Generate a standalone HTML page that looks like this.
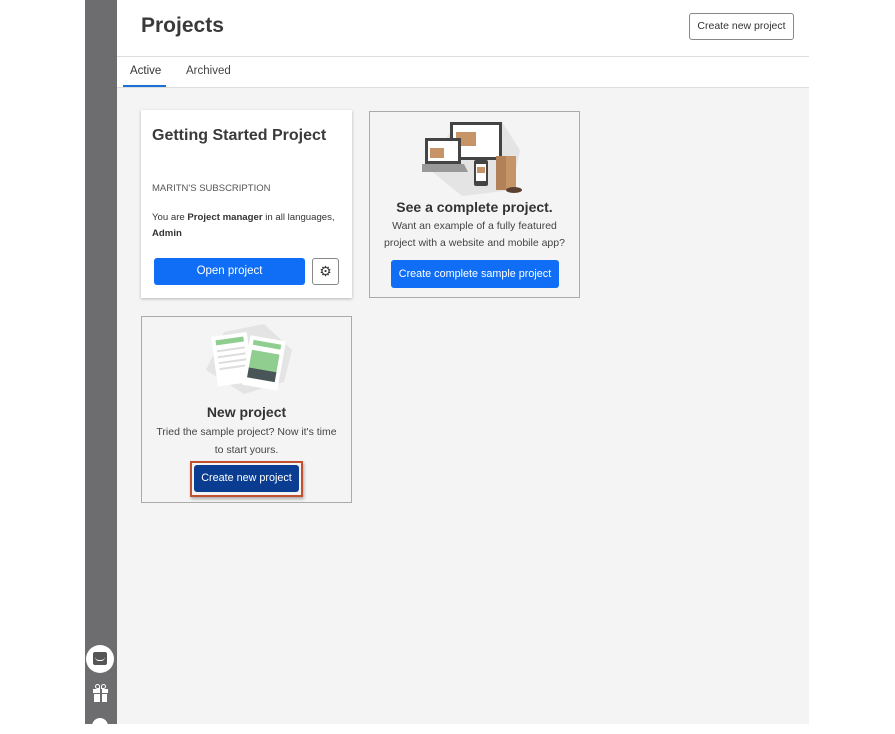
<!DOCTYPE html>
<html><head><meta charset="utf-8"><style>
*{box-sizing:border-box;margin:0;padding:0}
body{width:895px;height:724px;background:#fff;font-family:"Liberation Sans",sans-serif;color:#333;position:relative;overflow:hidden}
.side{position:absolute;left:85px;top:0;width:32px;height:724px;background:#6d6d6f}
.main{position:absolute;left:117px;top:0;width:692px;height:724px;background:#f4f4f4}
.hdr{position:absolute;left:0;top:0;width:692px;height:57px;background:#fff;border-bottom:1px solid #ddd}
.hdr h1{position:absolute;left:24px;top:14px;font-size:21px;font-weight:bold;color:#3a3a3a}
.hbtn{position:absolute;left:572px;top:13px;width:105px;height:27px;border:1px solid #888;border-radius:3px;font-size:10.5px;line-height:25px;text-align:center;color:#333;background:#fff;white-space:nowrap}
.tabs{position:absolute;left:0;top:57px;width:692px;height:31px;background:#fff;border-bottom:1px solid #ddd;font-size:11.5px}
.tabs span{position:absolute;top:8px}
.card{position:absolute;text-align:center}
.btn{position:absolute;background:#0f6ef5;color:#fff;border-radius:3px;font-size:11.5px;text-align:center;white-space:nowrap}
</style></head><body>
<div class="side">
<div style="position:absolute;left:1px;top:645px;width:28px;height:28px;border-radius:50%;background:#fff"><div style="position:absolute;left:7px;top:7px;width:14px;height:13px;background:#555;border-radius:2px"></div><div style="position:absolute;left:9px;top:12px;width:10px;height:4px;border-bottom:1.5px solid #fff;border-radius:0 0 5px 5px"></div></div>
<div style="position:absolute;left:8px;top:689px;width:15px;height:4px;background:#fff"></div>
<div style="position:absolute;left:9px;top:694px;width:13px;height:8px;background:#fff"></div>
<div style="position:absolute;left:14.5px;top:689px;width:2px;height:13px;background:#6d6d6f"></div>
<div style="position:absolute;left:10px;top:684px;width:5px;height:5px;border:1.5px solid #fff;border-radius:50% 50% 0 50%"></div>
<div style="position:absolute;left:16px;top:684px;width:5px;height:5px;border:1.5px solid #fff;border-radius:50% 50% 50% 0"></div>
<div style="position:absolute;left:7px;top:718px;width:16px;height:16px;border-radius:50%;background:#fff"></div>
</div>
<div class="main">
<div class="hdr"><h1>Projects</h1><div class="hbtn">Create new project</div></div>
<div class="tabs"><span style="left:13px;color:#333">Active</span><div style="position:absolute;left:6px;top:28px;width:43px;height:2px;background:#1a6fd8"></div><span style="left:69px;color:#444">Archived</span></div>

<div class="card" style="left:24px;top:110px;width:211px;height:188px;background:#fff;box-shadow:0 1px 3px rgba(0,0,0,.25);text-align:left">
<div style="position:absolute;left:11px;top:17px;font-size:16px;font-weight:bold;color:#3a3a3a;white-space:nowrap">Getting Started Project</div>
<div style="position:absolute;left:11px;top:73px;font-size:9.5px;color:#555">MARITN'S SUBSCRIPTION</div>
<div style="position:absolute;left:11px;top:100px;font-size:9.6px;line-height:16px;color:#333;width:200px">You are <b>Project manager</b> in all languages,<br><b>Admin</b></div>
<div class="btn" style="left:13px;top:148px;width:151px;height:27px;line-height:27px">Open project</div>
<div style="position:absolute;left:171px;top:148px;width:27px;height:27px;border:1px solid #888;border-radius:3px;text-align:center;line-height:25px;font-size:14px;color:#333">&#9881;</div>
</div>

<div class="card" style="left:252px;top:111px;width:211px;height:187px;border:1px solid #aaa">
<svg style="position:absolute;left:52px;top:8px" width="104" height="80" viewBox="0 0 104 80">
<polygon points="30,8 80,2 98,30 90,70 40,76 8,50" fill="#e4e4e4"/>
<rect x="28" y="2" width="52" height="38" fill="#444"/><rect x="31" y="5" width="46" height="32" fill="#fff"/><rect x="34" y="12" width="20" height="14" fill="#c79468"/>
<rect x="3" y="18" width="36" height="26" fill="#444"/><rect x="6" y="21" width="30" height="20" fill="#fff"/><rect x="8" y="28" width="14" height="10" fill="#c79468"/>
<polygon points="0,44 42,44 46,52 -2,52" fill="#999"/>
<rect x="52" y="40" width="14" height="26" rx="2" fill="#444"/><rect x="54" y="44" width="10" height="17" fill="#fff"/><rect x="55" y="47" width="8" height="6" fill="#c79468"/>
<rect x="74" y="36" width="20" height="34" fill="#c79468"/><rect x="74" y="36" width="10" height="34" fill="#b38158"/>
<ellipse cx="92" cy="70" rx="8" ry="3" fill="#5a4030"/>
</svg>
<div style="position:absolute;left:0;width:209px;top:87px;font-size:14px;font-weight:bold;color:#333">See a complete project.</div>
<div style="position:absolute;left:0;width:209px;top:106px;font-size:10.5px;line-height:17px;color:#444">Want an example of a fully featured<br>project with a website and mobile app?</div>
<div class="btn" style="left:21px;top:148px;width:168px;height:28px;line-height:28px;font-size:10.8px">Create complete sample project</div>
</div>

<div class="card" style="left:24px;top:316px;width:211px;height:187px;border:1px solid #aaa">
<svg style="position:absolute;left:62px;top:5px" width="90" height="75" viewBox="0 0 90 75">
<polygon points="20,10 60,2 88,28 80,60 40,72 2,48" fill="#e4e4e4"/>
<g transform="rotate(-8 30 35)"><rect x="10" y="12" width="36" height="50" fill="#fff"/><rect x="14" y="16" width="28" height="5" fill="#8fce8f"/><rect x="14" y="26" width="28" height="2" fill="#ddd"/><rect x="14" y="32" width="28" height="2" fill="#ddd"/><rect x="14" y="38" width="28" height="2" fill="#ddd"/><rect x="14" y="44" width="28" height="2" fill="#ddd"/></g>
<g transform="rotate(10 60 40)"><rect x="42" y="16" width="36" height="50" fill="#fff"/><rect x="46" y="20" width="28" height="5" fill="#8fce8f"/><rect x="46" y="30" width="28" height="28" fill="#8fce8f"/><rect x="46" y="48" width="28" height="10" fill="#4a555a"/></g>
</svg>
<div style="position:absolute;left:0;width:209px;top:87px;font-size:14px;font-weight:bold;color:#333">New project</div>
<div style="position:absolute;left:0;width:209px;top:106px;font-size:10.5px;line-height:18px;color:#444">Tried the sample project? Now it's time<br>to start yours.</div>
<div style="position:absolute;left:48px;top:144px;width:113px;height:36px;border:2px solid #c0502f;box-shadow:1px 2px 3px rgba(0,0,0,.3)"></div>
<div class="btn" style="left:52px;top:148px;width:105px;height:27px;line-height:27px;background:#0a3d91;font-size:10.8px">Create new project</div>
</div>
</div>
</body></html>
